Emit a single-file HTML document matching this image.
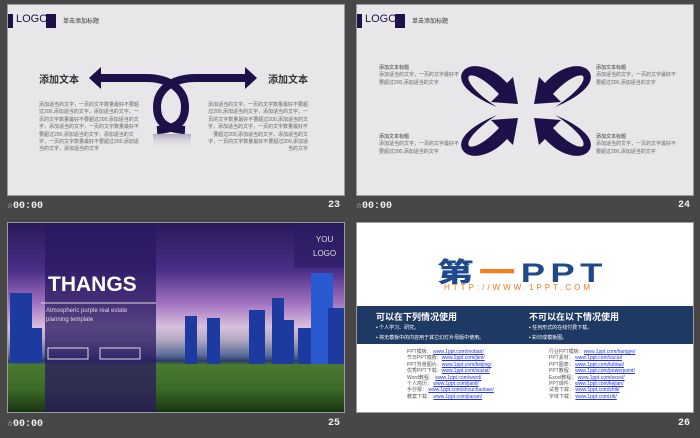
<!DOCTYPE html>
<html><head><meta charset="utf-8"><style>
*{margin:0;padding:0;box-sizing:border-box}
body{width:700px;height:438px;background:#474747;position:relative;overflow:hidden;font-family:"Liberation Sans","Noto Sans CJK SC",sans-serif}
.s{position:absolute;border:1px solid #9a9a9a;overflow:hidden}
.lbl{position:absolute;color:#f0f0f0;font-size:10px;font-weight:bold;font-family:"Liberation Mono",monospace}
.t{position:absolute;font-size:5px;line-height:7.4px;color:#666}
a{color:#2233ee;text-decoration:underline}
</style></head><body>

<!-- Slide 23 -->
<div class="s" style="left:7px;top:4px;width:338px;height:192px;background:#e8e6e8">
<svg width="338" height="192" style="position:absolute;left:0;top:0">
<rect x="0" y="9" width="5" height="14" fill="#1e1048"/>
<rect x="38" y="9" width="10" height="14" fill="#1e1048"/>
<g transform="translate(-7,-4)">
<defs><linearGradient id="rf" x1="0" y1="0" x2="0" y2="1"><stop offset="0" stop-color="#8a80a8" stop-opacity=".6"/><stop offset="1" stop-color="#e8e6e8" stop-opacity="0"/></linearGradient></defs>
<path d="M95,77 L145,77 C168,77 184,88 184,106 C184,121 176,128 156,129 M245,77 L195,77 C172,77 156,88 156,106 C156,121 164,128 184,129" stroke="#1e1048" stroke-width="8" fill="none"/>
<polygon points="88,77 100,66 100,88" fill="#1e1048"/>
<polygon points="256,77 244,66 244,88" fill="#1e1048"/>
<rect x="152" y="133" width="38" height="14" fill="url(#rf)"/>
</g>
</svg>
<div style="position:absolute;left:8px;top:8px;font-size:11px;color:#1e1048">LOGO</div>
<div style="position:absolute;left:55px;top:11px;font-size:6px;color:#333">单击添加标题</div>
<div style="position:absolute;left:31px;top:66px;font-size:10px;font-weight:bold;color:#333">添加文本</div>
<div style="position:absolute;left:260px;top:66px;font-size:10px;font-weight:bold;color:#333">添加文本</div>
<div class="t" style="left:31px;top:97px;width:100px">添加适当的文字，一页的文字数量最好不要超过200,添加适当的文字，添加适当的文字，一页的文字数量最好不要超过200,添加适当的文字，添加适当的文字，一页的文字数量最好不要超过200,添加适当的文字，添加适当的文字，一页的文字数量最好不要超过200,添加适当的文字，添加适当的文字</div>
<div class="t" style="left:200px;top:97px;width:100px;text-align:right">添加适当的文字，一页的文字数量最好不要超过200,添加适当的文字，添加适当的文字，一页的文字数量最好不要超过200,添加适当的文字，添加适当的文字，一页的文字数量最好不要超过200,添加适当的文字，添加适当的文字，一页的文字数量最好不要超过200,添加适当的文字</div>
</div>
<div class="lbl" style="left:7px;top:200px">☆00:00</div>
<div class="lbl" style="left:328px;top:200px">23</div>

<!-- Slide 24 -->
<div class="s" style="left:356px;top:4px;width:338px;height:192px;background:#e8e6e8">
<svg width="338" height="192" style="position:absolute;left:0;top:0">
<rect x="0" y="9" width="5" height="14" fill="#1e1048"/>
<rect x="38" y="9" width="10" height="14" fill="#1e1048"/>
<g transform="translate(-356,-4)" fill="#1e1048">
<path id="ar" d="M496,106 C474,97 456,84 461,72 C467,60 490,64 506,82 L512,76 L517,103 L490,101 L498,93 C486,80 473,72 468,75 C464,81 480,96 496,106 Z"/>
<use href="#ar" transform="translate(1050,0) scale(-1,1)"/>
<use href="#ar" transform="translate(0,220) scale(1,-1)"/>
<use href="#ar" transform="translate(1050,220) scale(-1,-1)"/>
</g>
</svg>
<div style="position:absolute;left:8px;top:8px;font-size:11px;color:#1e1048">LOGO</div>
<div style="position:absolute;left:55px;top:11px;font-size:6px;color:#333">单击添加标题</div>
<div class="t" style="left:22px;top:60px;width:80px"><span style="color:#333">添加文本标题</span><br>添加适当的文字，一页的文字最好不要超过200,添加适当的文字</div>
<div class="t" style="left:239px;top:60px;width:80px"><span style="color:#333">添加文本标题</span><br>添加适当的文字，一页的文字最好不要超过200,添加适当的文字</div>
<div class="t" style="left:22px;top:129px;width:80px"><span style="color:#333">添加文本标题</span><br>添加适当的文字，一页的文字最好不要超过200,添加适当的文字</div>
<div class="t" style="left:239px;top:129px;width:80px"><span style="color:#333">添加文本标题</span><br>添加适当的文字，一页的文字最好不要超过200,添加适当的文字</div>
</div>
<div class="lbl" style="left:356px;top:200px">☆00:00</div>
<div class="lbl" style="left:678px;top:200px">24</div>

<!-- Slide 25 -->
<div class="s" style="left:7px;top:222px;width:338px;height:191px;background:linear-gradient(180deg,#2a1a5a 0%,#4a2e88 25%,#a070c0 42%,#d8c0dc 55%,#b0a8c0 62%,#5a6a98 70%,#2a3a6a 73%,#4a7a30 75%,#3a6a26 88%,#1a3412 100%)">
<svg width="338" height="191" style="position:absolute;left:0;top:0">
<g fill="#1d3aa0">
<rect x="2" y="70" width="22" height="70"/><rect x="20" y="105" width="14" height="35"/>
<rect x="177" y="93" width="12" height="48"/><rect x="199" y="95" width="13" height="46"/>
<rect x="241" y="87" width="16" height="54"/><rect x="264" y="75" width="12" height="66"/>
<rect x="270" y="97" width="16" height="44"/><rect x="290" y="105" width="14" height="36"/>
<rect x="303" y="50" width="22" height="91" fill="#2a5ad0"/><rect x="320" y="85" width="18" height="56"/>
</g>
<rect x="37" y="0" width="111" height="191" fill="#2a1a60" opacity=".75"/>
<rect x="286" y="0" width="52" height="45" fill="#2a1a60" opacity=".6"/>
<line x1="33" y1="80" x2="148" y2="80" stroke="#ddd" stroke-width="1"/>
<rect x="40" y="125" width="40" height="11" fill="none" stroke="#ddd"/>
<rect x="92" y="125" width="40" height="11" fill="none" stroke="#ddd"/>
</svg>
<div style="position:absolute;left:40px;top:50px;font-size:21px;font-weight:bold;color:#fff">THANGS</div>
<div style="position:absolute;left:38px;top:84px;font-size:6px;line-height:9px;color:#ddd;width:100px">Atmospheric purple real estate planning template</div>
<div style="position:absolute;left:305px;top:10px;font-size:8px;line-height:14px;color:#ddd;text-align:center">YOU<br>LOGO</div>
</div>
<div class="lbl" style="left:7px;top:418px">☆00:00</div>
<div class="lbl" style="left:328px;top:418px">25</div>

<!-- Slide 26 -->
<div class="s" style="left:356px;top:222px;width:338px;height:191px;background:#fff">
<div style="position:absolute;left:80px;top:28px;font-size:27px;font-weight:900;color:#1e4a8c;letter-spacing:4px;white-space:nowrap;transform:scaleX(1.35);transform-origin:left top">第<span style="color:#f08020">一</span>PPT</div>
<div style="position:absolute;left:87px;top:60px;font-size:8px;color:#f07820;letter-spacing:3px;white-space:nowrap">HTTP://WWW.1PPT.COM</div>
<div style="position:absolute;left:0;top:83px;width:338px;height:38px;background:#1e3a64;color:#fff">
<div style="position:absolute;left:19px;top:4px;font-size:9px;font-weight:bold">可以在下列情况使用</div>
<div style="position:absolute;left:172px;top:4px;font-size:9px;font-weight:bold">不可以在以下情况使用</div>
<div style="position:absolute;left:19px;top:17px;font-size:5px;line-height:10px">▪ 个人学习、研究。<br>▪ 将无模板中的内容用于其它幻灯片母版中使用。</div>
<div style="position:absolute;left:172px;top:17px;font-size:5px;line-height:10px">▪ 任何形式的在线付费下载。<br>▪ 彩印成模板图。</div>
</div>
<div style="position:absolute;left:50px;top:126px;font-size:5px;line-height:6.4px;color:#555;white-space:nowrap">PPT模板： <a>www.1ppt.com/moban/</a><br>节日PPT模板：<a>www.1ppt.com/jieri/</a><br>PPT背景图片：<a>www.1ppt.com/beijing/</a><br>优秀PPT下载：<a>www.1ppt.com/xiazai/</a><br>Word教程： <a>www.1ppt.com/word/</a><br>个人简历： <a>www.1ppt.com/jianli/</a><br>手抄报： <a>www.1ppt.com/shouchaobao/</a><br>教案下载： <a>www.1ppt.com/jiaoan/</a></div>
<div style="position:absolute;left:192px;top:126px;font-size:5px;line-height:6.4px;color:#555;white-space:nowrap">行业PPT模板：<a>www.1ppt.com/hangye/</a><br>PPT素材： <a>www.1ppt.com/sucai/</a><br>PPT图表： <a>www.1ppt.com/tubiao/</a><br>PPT教程： <a>www.1ppt.com/powerpoint/</a><br>Excel教程： <a>www.1ppt.com/excel/</a><br>PPT课件： <a>www.1ppt.com/kejian/</a><br>试卷下载： <a>www.1ppt.com/shiti/</a><br>字体下载： <a>www.1ppt.com/ziti/</a></div>
</div>
<div class="lbl" style="left:678px;top:418px">26</div>
</body></html>
